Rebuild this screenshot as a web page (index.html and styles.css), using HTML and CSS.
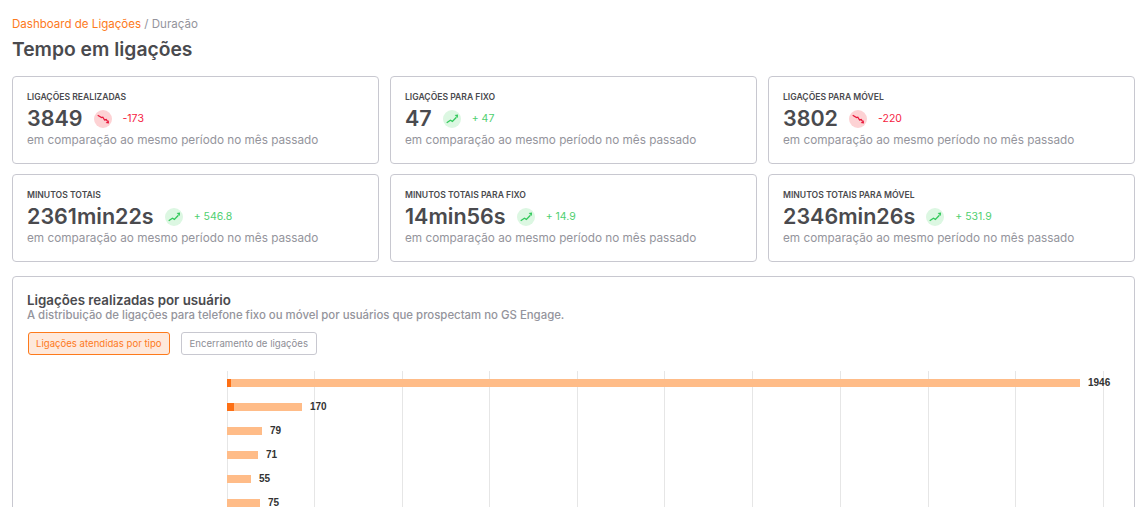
FILE: index.html
```html
<!DOCTYPE html>
<html lang="pt-BR">
<head>
    <meta charset="UTF-8">
    <title>Tempo em ligações</title>
    <link rel="stylesheet" href="styles.css">
</head>
<body>
    <div class="breadcrumb"><a href="#">Dashboard de Ligações</a> <span class="sep">/</span> Duração</div>
    <h1>Tempo em ligações</h1>

    <div class="cards">
        <div class="card">
            <div class="card-label">Ligações realizadas</div>
            <div class="card-row">
                <span class="card-value">3849</span>
                <span class="trend down"><svg viewBox="0 0 18 18"><path d="M3.7 5.3 L7.5 7.6 L8.8 7.2 L10.6 10 L12.2 9.6 L13.6 11.4"/><path class="tip" d="M11.6 13 L15 13.4 L14.8 10.2 Z"/></svg></span>
                <span class="delta down">-173</span>
            </div>
            <div class="card-desc">em comparação ao mesmo período no mês passado</div>
        </div>
        <div class="card">
            <div class="card-label">Ligações para fixo</div>
            <div class="card-row">
                <span class="card-value">47</span>
                <span class="trend up"><svg viewBox="0 0 18 18"><path d="M3.7 12.8 L7.4 10.2 L9.4 11.4 L13.4 7.2"/><path class="tip" d="M11.6 5 L15 4.6 L14.8 8 Z"/></svg></span>
                <span class="delta up">+ 47</span>
            </div>
            <div class="card-desc">em comparação ao mesmo período no mês passado</div>
        </div>
        <div class="card">
            <div class="card-label">Ligações para móvel</div>
            <div class="card-row">
                <span class="card-value">3802</span>
                <span class="trend down"><svg viewBox="0 0 18 18"><path d="M3.7 5.3 L7.5 7.6 L8.8 7.2 L10.6 10 L12.2 9.6 L13.6 11.4"/><path class="tip" d="M11.6 13 L15 13.4 L14.8 10.2 Z"/></svg></span>
                <span class="delta down">-220</span>
            </div>
            <div class="card-desc">em comparação ao mesmo período no mês passado</div>
        </div>
        <div class="card">
            <div class="card-label">Minutos totais</div>
            <div class="card-row">
                <span class="card-value">2361min22s</span>
                <span class="trend up"><svg viewBox="0 0 18 18"><path d="M3.7 12.8 L7.4 10.2 L9.4 11.4 L13.4 7.2"/><path class="tip" d="M11.6 5 L15 4.6 L14.8 8 Z"/></svg></span>
                <span class="delta up">+ 546.8</span>
            </div>
            <div class="card-desc">em comparação ao mesmo período no mês passado</div>
        </div>
        <div class="card">
            <div class="card-label">Minutos totais para fixo</div>
            <div class="card-row">
                <span class="card-value">14min56s</span>
                <span class="trend up"><svg viewBox="0 0 18 18"><path d="M3.7 12.8 L7.4 10.2 L9.4 11.4 L13.4 7.2"/><path class="tip" d="M11.6 5 L15 4.6 L14.8 8 Z"/></svg></span>
                <span class="delta up">+ 14.9</span>
            </div>
            <div class="card-desc">em comparação ao mesmo período no mês passado</div>
        </div>
        <div class="card">
            <div class="card-label">Minutos totais para móvel</div>
            <div class="card-row">
                <span class="card-value">2346min26s</span>
                <span class="trend up"><svg viewBox="0 0 18 18"><path d="M3.7 12.8 L7.4 10.2 L9.4 11.4 L13.4 7.2"/><path class="tip" d="M11.6 5 L15 4.6 L14.8 8 Z"/></svg></span>
                <span class="delta up">+ 531.9</span>
            </div>
            <div class="card-desc">em comparação ao mesmo período no mês passado</div>
        </div>
    </div>

    <div class="panel">
        <h2>Ligações realizadas por usuário</h2>
        <p class="panel-desc">A distribuição de ligações para telefone fixo ou móvel por usuários que prospectam no GS Engage.</p>
        <div class="tabs">
            <button class="tab active">Ligações atendidas por tipo</button>
            <button class="tab">Encerramento de ligações</button>
        </div>
        <svg class="chart" width="1092" height="136" viewBox="0 0 1092 136">
            <g class="grid">
                <line x1="199.5" y1="0" x2="199.5" y2="136"/>
                <line x1="286.5" y1="0" x2="286.5" y2="136"/>
                <line x1="374.5" y1="0" x2="374.5" y2="136"/>
                <line x1="461.5" y1="0" x2="461.5" y2="136"/>
                <line x1="549.5" y1="0" x2="549.5" y2="136"/>
                <line x1="636.5" y1="0" x2="636.5" y2="136"/>
                <line x1="724.5" y1="0" x2="724.5" y2="136"/>
                <line x1="812.5" y1="0" x2="812.5" y2="136"/>
                <line x1="900.5" y1="0" x2="900.5" y2="136"/>
                <line x1="987.5" y1="0" x2="987.5" y2="136"/>
                <line x1="1075.5" y1="0" x2="1075.5" y2="136"/>
            </g>
            <g class="bars">
                <rect x="199" y="8" width="853" height="8"/>
                <rect x="199" y="32" width="75" height="8"/>
                <rect x="199" y="56" width="35" height="8"/>
                <rect x="199" y="80" width="31" height="8"/>
                <rect x="199" y="104" width="24" height="8"/>
                <rect x="199" y="128" width="33" height="8"/>
            </g>
            <g class="bars-dark">
                <rect x="199" y="8" width="4" height="8"/>
                <rect x="199" y="32" width="7" height="8"/>
            </g>
            <g class="bar-values">
                <text x="1060" y="15">1946</text>
                <text x="282" y="39">170</text>
                <text x="242" y="63">79</text>
                <text x="238" y="87">71</text>
                <text x="231" y="111">55</text>
                <text x="240" y="135">75</text>
            </g>
        </svg>
    </div>
</body>
</html>
```

FILE: styles.css
```css
html, body {
    height: 100%;
    overflow: hidden;
}

body {
    margin: 0;
    padding: 17px 11px 0 12px;
    box-sizing: border-box;
    background: #fff;
    color: #4a4a4e;
    font-family: Inter, "Open Sans", "Liberation Sans", sans-serif;
}

.breadcrumb {
    font-size: 11.55px;
    line-height: 15px;
    color: #94949c;
}

.breadcrumb a {
    color: #fd7a1c;
    text-decoration: none;
}

h1 {
    margin: 4px 0 14px;
    font-size: 19.3px;
    line-height: 26px;
    font-weight: 600;
}

.cards {
    display: grid;
    grid-template-columns: repeat(3, 1fr);
    gap: 10.5px 11px;
}

.card {
    height: 87.5px;
    box-sizing: border-box;
    padding: 15px 14px 0;
    border: 1px solid #c8c8d0;
    border-radius: 4px;
}

.card-label {
    font-size: 8.6px;
    line-height: 11px;
    font-weight: 600;
    text-transform: uppercase;
}

.card-row {
    display: flex;
    align-items: center;
    height: 24px;
    margin-top: 3px;
}

.card-value {
    font-size: 21.5px;
    font-weight: 600;
    margin-right: 11px;
}

.trend {
    width: 18px;
    height: 18px;
    margin-top: 1px;
    margin-right: 11px;
    border-radius: 50%;
}

.trend svg {
    display: block;
    width: 18px;
    height: 18px;
    fill: none;
    stroke-width: 1.3;
}

.trend.down {
    background: #fdd2d4;
    stroke: #e8173a;
}

.trend.up {
    background: #dcf7e2;
    stroke: #33c95c;
}

.trend .tip {
    stroke: none;
}

.trend.down .tip {
    fill: #e8173a;
}

.trend.up .tip {
    fill: #33c95c;
}

.delta {
    font-size: 10.5px;
}

.delta.down {
    color: #f5233f;
}

.delta.up {
    color: #4fcf70;
}

.card-desc {
    margin-top: 2px;
    font-size: 11.75px;
    line-height: 16px;
    color: #94949c;
}

.panel {
    margin-top: 14.5px;
    height: 400px;
    box-sizing: border-box;
    padding: 15px 14px 0;
    border: 1px solid #c8c8d0;
    border-radius: 4px;
}

h2 {
    margin: 0;
    font-size: 13.3px;
    line-height: 16px;
    font-weight: 600;
}

.panel-desc {
    margin: 0;
    font-size: 11.4px;
    line-height: 15px;
    font-weight: 500;
    color: #94949c;
}

.tabs {
    display: flex;
    gap: 11px;
    margin-top: 9px;
    padding-left: 1px;
}

.tab {
    height: 23px;
    padding: 0 8px;
    border: 1px solid #c8c8d0;
    border-radius: 3px;
    background: #fff;
    color: #8e8e96;
    font-family: inherit;
    font-size: 9.6px;
}

.tab.active {
    padding: 0 7px;
    border-color: #fd7a1c;
    background: #fee9dc;
    color: #fd7a1c;
}

.chart {
    display: block;
    margin-top: 16px;
    margin-left: 1px;
}

.grid line {
    stroke: #e6e6e6;
    stroke-width: 1;
}

.bars rect {
    fill: #ffbc88;
}

.bars-dark rect {
    fill: #fd6f14;
}

.bar-values text {
    font-family: "Liberation Sans", Arial, sans-serif;
    font-size: 10px;
    font-weight: 700;
    fill: #333;
}
```
